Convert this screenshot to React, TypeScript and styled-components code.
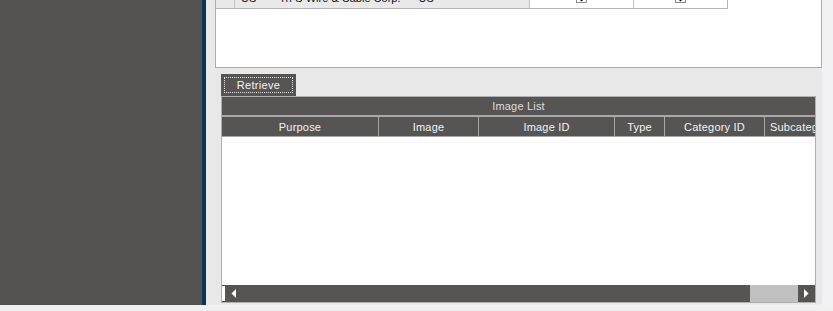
import React from "react";
import styled, { createGlobalStyle } from "styled-components";

const Global = createGlobalStyle`
  html, body { margin: 0; padding: 0; background: #f0f0f0; }
  body { font-family: "Liberation Sans", Arial, sans-serif; overflow: hidden; }
  * { box-sizing: border-box; }
`;

const Page = styled.div`
  width: 833px;
  height: 311px;
  display: flex;
  flex-direction: column;
  background: #f0f0f0;
`;

const Main = styled.div`
  height: 305px;
  display: flex;
`;

const Sidebar = styled.div`
  width: 202px;
  background: #545250;
`;

const Stripe = styled.div`
  width: 4px;
  background: #0c3452;
`;

const Content = styled.div`
  width: 616px;
  background: #e8e8e8;
  display: flex;
  flex-direction: column;
  border-bottom-right-radius: 3px;
`;

const Gutter = styled.div`
  flex: 1;
  background: #f2f2f4;
`;

const TopPanel = styled.div`
  margin-left: 9px;
  height: 68px;
  background: #ffffff;
  border: 1px solid #ababab;
  border-top: none;
  overflow: hidden;
`;

const DataRow = styled.div`
  margin-top: -12px;
  height: 21px;
  display: flex;
  width: 512px;
  border-bottom: 1px solid #b4b4b4;
  border-right: 1px solid #b4b4b4;
  font-size: 11px;
  color: #111;
`;

const GrayCell = styled.div<{ $w: number }>`
  width: ${(p) => p.$w}px;
  background: #e9e9e9;
  border-right: 1px solid #c2c2c2;
  display: flex;
  align-items: center;
  white-space: nowrap;
  line-height: 19px;
`;

const TextSpan = styled.span<{ $pad: number }>`
  margin-left: ${(p) => p.$pad}px;
`;

const WhiteCell = styled.div<{ $w: number; $last?: boolean }>`
  width: ${(p) => p.$w}px;
  display: flex;
  justify-content: center;
  align-items: flex-end;
  padding-bottom: 5px;
  border-right: ${(p) => (p.$last ? "none" : "1px solid #c2c2c2")};
`;

const Check = styled.div`
  width: 11px;
  height: 13px;
  border: 1px solid #8a8a8a;
  background: #fff;
  display: flex;
  align-items: flex-end;
  justify-content: center;
`;

const Lower = styled.div`
  flex: 1;
  padding: 6px 5px 2px 15px;
  display: flex;
  flex-direction: column;
  align-items: flex-start;
`;

const Tab = styled.div`
  width: 75px;
  height: 22px;
  background: #575553;
  padding: 3px;
  display: flex;
`;

const TabInner = styled.div`
  flex: 1;
  border: 1px dotted #e0e0e0;
  color: #f4f4f4;
  font-size: 11px;
  letter-spacing: 0.3px;
  display: flex;
  align-items: center;
  justify-content: center;
`;

const ListPanel = styled.div`
  width: 595px;
  flex: 1;
  border: 1px solid #b0b0b0;
  background: #ffffff;
  display: flex;
  flex-direction: column;
`;

const Caption = styled.div`
  height: 20px;
  background: #575553;
  color: #dcdcdc;
  font-size: 11px;
  letter-spacing: 0.2px;
  display: flex;
  align-items: center;
  justify-content: center;
  border-bottom: 2px solid #a8a8a8;
`;

const HeadRow = styled.div`
  height: 20px;
  background: #575553;
  display: flex;
  overflow: hidden;
  border-bottom: 1px solid #a8a8a8;
`;

const HeadCell = styled.div<{ $w?: number }>`
  ${(p) => (p.$w ? `width: ${p.$w}px; flex: none;` : "flex: 1;")}
  color: #f2f2f2;
  font-size: 11px;
  letter-spacing: 0.2px;
  display: flex;
  align-items: center;
  justify-content: center;
  white-space: nowrap;
  overflow: hidden;
  border-right: 1px solid #a8a8a8;
  &:last-child {
    border-right: none;
    justify-content: flex-start;
    padding-left: 5px;
  }
`;

const Body = styled.div`
  flex: 1;
`;

const HScroll = styled.div`
  height: 17px;
  display: flex;
  background: #575553;
`;

const EdgeStrip = styled.div`
  width: 3px;
  background: #ffffff;
  margin: 1px 0;
`;

const ArrowBtn = styled.div`
  width: 17px;
  height: 17px;
  background: #575553;
  display: flex;
  align-items: center;
  justify-content: center;
`;

const Track = styled.div`
  flex: 1;
  display: flex;
  justify-content: flex-end;
`;

const Thumb = styled.div`
  width: 48px;
  background: #c0c0c0;
`;

const Bottom = styled.div`
  flex: 1;
  background: #f0f0f0;
`;

const columns: { label: string; w?: number }[] = [
  { label: "Purpose", w: 157 },
  { label: "Image", w: 100 },
  { label: "Image ID", w: 136 },
  { label: "Type", w: 50 },
  { label: "Category ID", w: 100 },
  { label: "Subcategory ID" },
];

const DownArrow = () => (
  <svg width="9" height="10" viewBox="0 0 9 10">
    <path d="M3 0 H6 V5 H9 L4.5 9.5 L0 5 H3 Z" fill="#000" />
  </svg>
);

const Tri = ({ dir }: { dir: "left" | "right" }) => (
  <svg width="5" height="9" viewBox="0 0 5 9">
    {dir === "left" ? (
      <path d="M5 0 V9 L0.5 4.5 Z" fill="#fff" />
    ) : (
      <path d="M0 0 V9 L4.5 4.5 Z" fill="#fff" />
    )}
  </svg>
);

export default function App() {
  return (
    <Page>
      <Global />
      <Main>
        <Sidebar />
        <Stripe />
        <Content>
          <TopPanel>
            <DataRow>
              <GrayCell $w={19} />
              <GrayCell $w={296}>
                <TextSpan $pad={6}>US</TextSpan>
                <TextSpan $pad={23}>Tri-S Wire &amp; Cable Corp.</TextSpan>
                <TextSpan $pad={18}>US</TextSpan>
              </GrayCell>
              <WhiteCell $w={104}>
                <Check>
                  <DownArrow />
                </Check>
              </WhiteCell>
              <WhiteCell $w={93} $last>
                <Check>
                  <DownArrow />
                </Check>
              </WhiteCell>
            </DataRow>
          </TopPanel>
          <Lower>
            <Tab>
              <TabInner>Retrieve</TabInner>
            </Tab>
            <ListPanel>
              <Caption>Image List</Caption>
              <HeadRow>
                {columns.map((c) => (
                  <HeadCell key={c.label} $w={c.w}>
                    {c.label}
                  </HeadCell>
                ))}
              </HeadRow>
              <Body />
              <HScroll>
                <EdgeStrip />
                <ArrowBtn>
                  <Tri dir="left" />
                </ArrowBtn>
                <Track>
                  <Thumb />
                </Track>
                <ArrowBtn>
                  <Tri dir="right" />
                </ArrowBtn>
              </HScroll>
            </ListPanel>
          </Lower>
        </Content>
        <Gutter />
      </Main>
      <Bottom />
    </Page>
  );
}
